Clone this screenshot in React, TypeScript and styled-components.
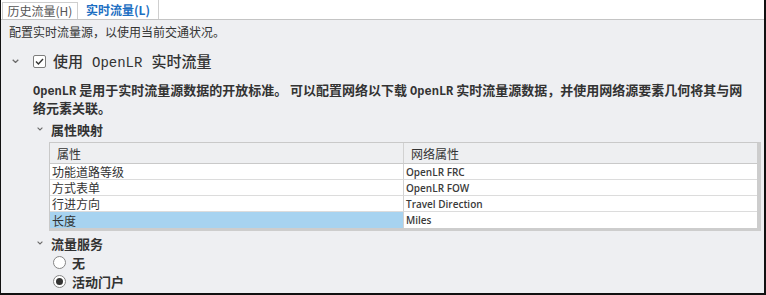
import React from 'react';
import styled, { createGlobalStyle } from 'styled-components';

const CJK = `"Noto Sans CJK SC", "Noto Sans", sans-serif`;
const MIXED = `"Liberation Mono", "Noto Sans CJK SC", monospace`;

const GlobalStyle = createGlobalStyle`
  html, body { margin: 0; padding: 0; background: #eeeff2; }
  * { box-sizing: border-box; }
`;

const rows = [
  { name: '功能道路等级', field: 'OpenLR FRC' },
  { name: '方式表单', field: 'OpenLR FOW' },
  { name: '行进方向', field: 'Travel Direction' },
  { name: '长度', field: 'Miles', selected: true },
];

const Chevron = ({ size = 7 }: { size?: number }) => (
  <svg width={size} height={size * 0.6} viewBox="0 0 10 6">
    <path d="M1 1l4 4 4-4" fill="none" stroke="#6b6b6b" strokeWidth="1.8" />
  </svg>
);

export default function App() {
  return (
    <>
      <GlobalStyle />
      <Frame>
        <TabStrip>
          <Tab>历史流量(H)</Tab>
          <Tab $active>实时流量(L)</Tab>
        </TabStrip>

        <Intro>配置实时流量源，以使用当前交通状况。</Intro>

        <TitleRow>
          <Chevron />
          <CheckBox>
            <svg width="11" height="11" viewBox="0 0 11 11">
              <path d="M2 5.6l2.4 2.4L9 3" fill="none" stroke="#333" strokeWidth="1.4" />
            </svg>
          </CheckBox>
          <TitleText>
            使用 <Mono $size={14}>OpenLR</Mono> 实时流量
          </TitleText>
        </TitleRow>

        <Desc>
          <Mono $size={12}>OpenLR</Mono> 是用于实时流量源数据的开放标准。 可以配置网络以下载 <Mono $size={12}>OpenLR</Mono> 实时流量源数据，并使用网络源要素几何将其与网
          <br />
          络元素关联。
        </Desc>

        <SectionRow>
          <Chevron size={6} />
          <SectionTitle>属性映射</SectionTitle>
        </SectionRow>

        <Table>
          <Cell $head $first>属性</Cell>
          <Cell $head>网络属性</Cell>
          {rows.map((r) => (
            <React.Fragment key={r.name}>
              <Cell $first $selected={r.selected}>{r.name}</Cell>
              <Cell $latin>{r.field}</Cell>
            </React.Fragment>
          ))}
        </Table>

        <SectionRow $gap={4}>
          <Chevron size={6} />
          <SectionTitle>流量服务</SectionTitle>
        </SectionRow>

        <RadioGroup>
          <RadioRow>
            <Radio />
            <RadioLabel>无</RadioLabel>
          </RadioRow>
          <RadioRow>
            <Radio $checked />
            <RadioLabel>活动门户</RadioLabel>
          </RadioRow>
        </RadioGroup>
      </Frame>
    </>
  );
}

const Frame = styled.div`
  width: 766px; height: 295px;
  background: #eeeff2;
  border-left: 1px solid #111;
  border-right: 2px solid #111;
  border-bottom: 2px solid #111;
  font-family: ${CJK};
  color: #333;
  overflow: hidden;
  display: flex; flex-direction: column;
`;

const TabStrip = styled.div`
  height: 20px; flex-shrink: 0;
  background: #fff;
  border-bottom: 1px solid #c4c4c4;
  display: flex; align-items: flex-end;
  padding-left: 1px;
`;

const Tab = styled.div<{ $active?: boolean }>`
  height: 17px;
  width: ${(p) => (p.$active ? 81 : 76)}px;
  display: flex; align-items: center; justify-content: center;
  font-size: 12px; line-height: 16px;
  white-space: nowrap;
  background: #fff;
  color: ${(p) => (p.$active ? '#1b6ec2' : '#555')};
  font-weight: ${(p) => (p.$active ? 700 : 400)};
  border: 1px solid #cfcfcf;
  border-bottom: none;
  ${(p) => p.$active && 'border-top: none; border-left: none; height: 19px;'}
`;

const Intro = styled.div`
  margin-top: 4px; padding-left: 8px;
  font-size: 12px; line-height: 16px;
  color: #333;
`;

const TitleRow = styled.div`
  margin-top: 11px; height: 20px;
  padding-left: 11px;
  display: flex; align-items: center;
`;

const CheckBox = styled.span`
  width: 13px; height: 13px;
  margin-left: 14px;
  border: 1px solid #7d7d7d; border-radius: 2px;
  background: #fff;
  display: flex; align-items: center; justify-content: center;
`;

const TitleText = styled.span`
  margin-left: 7px;
  font-family: ${MIXED};
  font-size: 15px; font-weight: 500; color: #333;
  white-space: nowrap;
`;

const Mono = styled.span<{ $size: number }>`
  font-family: "Liberation Mono", monospace;
  font-size: ${(p) => p.$size}px;
`;

const Desc = styled.div`
  margin-top: 11px; padding-left: 32px;
  font-size: 13px; line-height: 16px; font-weight: 700;
  color: #333; white-space: nowrap;
`;

const SectionRow = styled.div<{ $gap?: number }>`
  margin-top: ${(p) => p.$gap ?? 5}px; height: 16px;
  padding-left: 36px;
  display: flex; align-items: center; gap: 8px;
`;

const SectionTitle = styled.span`
  font-size: 13px; font-weight: 700; color: #333;
`;

const Table = styled.div`
  margin-top: 5px; margin-left: 48px;
  width: 712px;
  display: grid;
  grid-template-columns: 354px 1fr;
  grid-template-rows: 21px repeat(4, 16px);
  background: #fff;
  border: 1px solid #c9c9c9;
  border-right: 4px solid #cdcdcd;
  border-bottom: 3px solid #cdcdcd;
`;

const Cell = styled.div<{ $head?: boolean; $first?: boolean; $selected?: boolean; $latin?: boolean }>`
  display: flex; align-items: center;
  padding-left: ${(p) => (p.$head ? 7 : 2)}px;
  white-space: nowrap; overflow: hidden;
  background: ${(p) => (p.$head ? '#eeeff1' : p.$selected ? '#a7d3f0' : '#fff')};
  border-bottom: 1px solid ${(p) => (p.$head ? '#c9c9c9' : '#dcdcdc')};
  border-right: ${(p) => (p.$first ? '1px solid #d2d2d2' : 'none')};
  font-size: 12px; color: #333;
  ${(p) =>
    p.$latin &&
    `font-family: "Open Sans", sans-serif; font-size: 10px; font-weight: 600; color: #3a3a3a;`}
  &:nth-last-child(-n + 2) { border-bottom: none; }
`;

const RadioGroup = styled.div`
  margin-top: 2px; padding-left: 52px;
  display: flex; flex-direction: column;
`;

const RadioRow = styled.div`
  height: 19px;
  display: flex; align-items: center; gap: 6px;
`;

const Radio = styled.span<{ $checked?: boolean }>`
  width: 13px; height: 13px; border-radius: 50%;
  border: 1px solid #858585; background: #fff;
  display: flex; align-items: center; justify-content: center;
  &::after {
    content: '';
    width: 7px; height: 7px; border-radius: 50%;
    background: ${(p) => (p.$checked ? '#333' : 'transparent')};
  }
`;

const RadioLabel = styled.span`
  font-size: 13px; font-weight: 700; color: #333;
`;
